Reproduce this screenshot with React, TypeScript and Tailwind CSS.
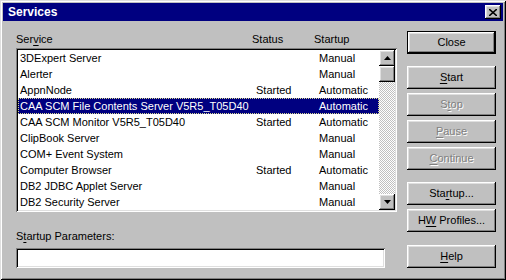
import React from 'react';

const raised =
  'shadow-[inset_-1px_-1px_#000000,inset_1px_1px_#ffffff,inset_-2px_-2px_#808080,inset_2px_2px_#dfdfdf]';
const sunken =
  'shadow-[inset_1px_1px_#808080,inset_-1px_-1px_#ffffff,inset_2px_2px_#000000,inset_-2px_-2px_#dfdfdf]';

type Row = { name: string; status: string; startup: string };

const rows: Row[] = [
  { name: '3DExpert Server', status: '', startup: 'Manual' },
  { name: 'Alerter', status: '', startup: 'Manual' },
  { name: 'AppnNode', status: 'Started', startup: 'Automatic' },
  { name: 'CAA SCM File Contents Server V5R5_T05D40', status: '', startup: 'Automatic' },
  { name: 'CAA SCM Monitor V5R5_T05D40', status: 'Started', startup: 'Automatic' },
  { name: 'ClipBook Server', status: '', startup: 'Manual' },
  { name: 'COM+ Event System', status: '', startup: 'Manual' },
  { name: 'Computer Browser', status: 'Started', startup: 'Automatic' },
  { name: 'DB2 JDBC Applet Server', status: '', startup: 'Manual' },
  { name: 'DB2 Security Server', status: '', startup: 'Manual' },
];

function Mn({ pre, key1, post }: { pre: string; key1: string; post: string }) {
  return (
    <span className="whitespace-pre">
      {pre}
      <span className="underline underline-offset-[2px]">{key1}</span>
      {post}
    </span>
  );
}

function Button({
  children,
  disabled,
  isDefault,
}: {
  children: React.ReactNode;
  disabled?: boolean;
  isDefault?: boolean;
}) {
  if (isDefault) {
    return (
      <div className="h-[23px] border border-black">
        <div className={`h-full flex items-center justify-center ${raised}`}>{children}</div>
      </div>
    );
  }
  return (
    <div
      className={`h-[23px] flex items-center justify-center ${raised} ${
        disabled ? 'text-[#808080] [text-shadow:1px_1px_0_#ffffff]' : ''
      }`}
    >
      {children}
    </div>
  );
}

function Arrow({ up }: { up?: boolean }) {
  return (
    <div className={`w-[16px] h-[16px] bg-[#c0c0c0] flex items-center justify-center ${raised}`}>
      <svg width="7" height="4" viewBox="0 0 7 4">
        {up ? <polygon points="3.5,0 7,4 0,4" fill="#000" /> : <polygon points="0,0 7,0 3.5,4" fill="#000" />}
      </svg>
    </div>
  );
}

export default function App() {
  return (
    <div
      className={`w-[506px] h-[280px] bg-[#c0c0c0] p-[3px] text-[11px] leading-[13px] text-black overflow-hidden shadow-[inset_1px_1px_#dfdfdf,inset_-1px_-1px_#000000,inset_2px_2px_#ffffff,inset_-2px_-2px_#808080]`}
      style={{ fontFamily: '"Liberation Sans", Arial, sans-serif' }}
    >
      <div className="h-[18px] bg-[#000080] flex items-center justify-between pl-[5px] pr-[2px]">
        <span className="text-white font-bold text-[12px]">Services</span>
        <div className={`w-[16px] h-[14px] bg-[#c0c0c0] flex items-center justify-center ${raised}`}>
          <svg width="8" height="7" viewBox="0 0 8 7">
            <path d="M0 0 L8 7 M8 0 L0 7" stroke="#000" strokeWidth="1.6" />
          </svg>
        </div>
      </div>

      <div className="flex pl-[13px]">
        <div className="w-[381px] pt-[12px]">
          <div className="h-[15px] grid grid-cols-[236px_62px_1fr]">
            <Mn pre="Ser" key1="v" post="ice" />
            <span>Status</span>
            <span>Startup</span>
          </div>
          <div className={`h-[164px] bg-white p-[2px] flex ${sunken}`}>
            <div className="flex-1 flex flex-col">
              {rows.map((r, i) => {
                const sel = i === 3;
                return (
                  <div
                    key={r.name}
                    className={`h-[16px] grid grid-cols-[236px_63px_1fr] items-center pl-[2px] ${
                      sel ? 'bg-[#000080] text-white outline-1 outline-dotted outline-[#d8d890] -outline-offset-1' : ''
                    }`}
                  >
                    <span className="whitespace-nowrap">{r.name}</span>
                    <span>{r.status}</span>
                    <span>{r.startup}</span>
                  </div>
                );
              })}
            </div>
            <div className="w-[16px] flex flex-col">
              <Arrow up />
              <div className={`w-[16px] h-[16px] bg-[#c0c0c0] ${raised}`} />
              <div className="flex-1 bg-[repeating-conic-gradient(#c0c0c0_0_25%,#ffffff_0_50%)] bg-[length:2px_2px]" />
              <Arrow />
            </div>
          </div>
          <div className="mt-[18px] h-[18px]">
            <Mn pre="S" key1="t" post="artup Parameters:" />
          </div>
          <div className={`w-[369px] h-[20px] bg-white ${sunken}`} />
        </div>

        <div className="ml-[10px] w-[89px] pt-[10px] flex flex-col">
          <Button isDefault>Close</Button>
          <div className="mt-[12px] flex flex-col gap-[4px]">
            <Button>
              <Mn pre="" key1="S" post="tart" />
            </Button>
            <Button disabled>
              <Mn pre="S" key1="t" post="op" />
            </Button>
            <Button disabled>
              <Mn pre="" key1="P" post="ause" />
            </Button>
            <Button disabled>
              <Mn pre="" key1="C" post="ontinue" />
            </Button>
          </div>
          <div className="mt-[12px] flex flex-col gap-[4px]">
            <Button>
              <Mn pre="Sta" key1="r" post="tup..." />
            </Button>
            <Button>
              <Mn pre="H" key1="W" post=" Profiles..." />
            </Button>
          </div>
          <div className="mt-[13px]">
            <Button>
              <Mn pre="" key1="H" post="elp" />
            </Button>
          </div>
        </div>
      </div>
    </div>
  );
}
